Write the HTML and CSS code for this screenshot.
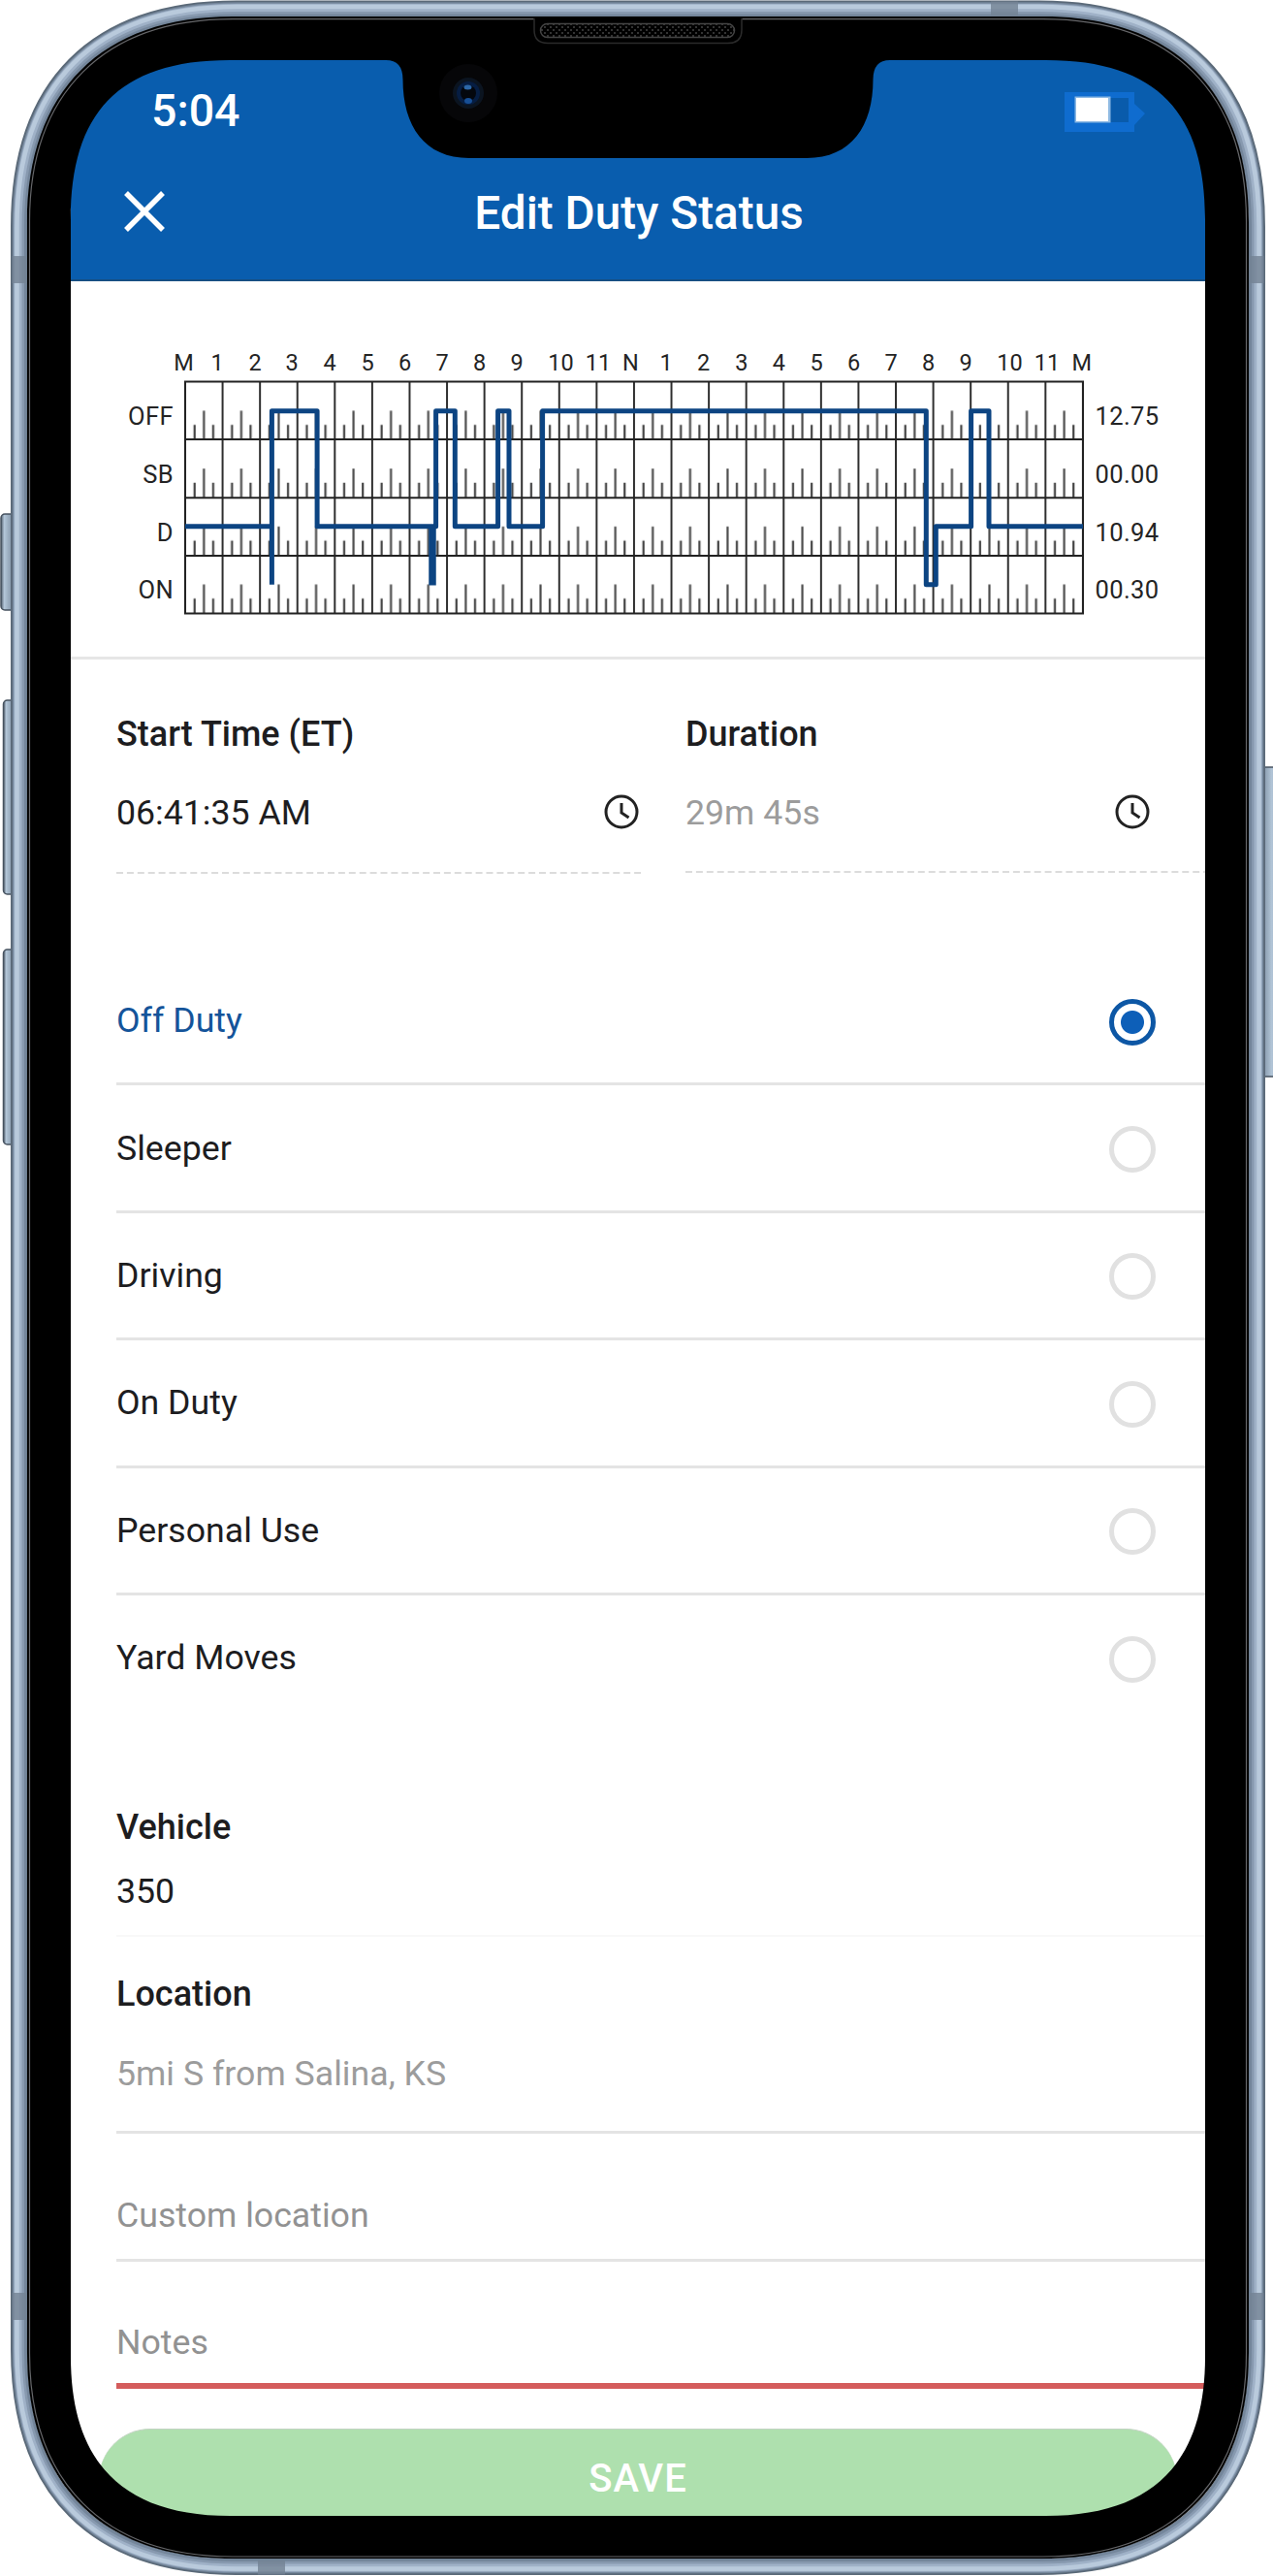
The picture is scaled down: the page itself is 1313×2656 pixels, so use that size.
FILE: index.html
```html
<!DOCTYPE html>
<html lang="en">
<head>
<meta charset="utf-8">
<title>Edit Duty Status</title>
<link rel="stylesheet" href="styles.css">
</head>
<body>
<div class="phone">
  <main class="screen">
    <header class="header">
      <div class="status-bar">
        <span class="time">5:04</span>
        <svg class="battery" width="84" height="44" viewBox="0 0 84 44"><path d="M0 1h72v12l11 10-11 12v7H0z" fill="#0f6ccf"/><rect x="46" y="7" width="20" height="25" fill="#095bab"/><rect x="10.500" y="5.500" width="37" height="27" fill="#8eb9e3"/><rect x="12" y="7" width="33" height="24" fill="#fff"/></svg>
      </div>
      <div class="title-bar">
        <svg class="close" width="42" height="42" viewBox="0 0 42 42"><path d="M2 2L40 40M40 2L2 40" stroke="#fff" stroke-width="5.500" fill="none"/></svg>
        <h1>Edit Duty Status</h1>
      </div>
    </header>

    <section class="log">
      <svg width="1170" height="389" viewBox="73 290 1170 389">
        <defs>
          <pattern id="cell" x="191" y="393.500" width="38.580" height="59.700" patternUnits="userSpaceOnUse">
            <path d="M9.700 44.500V59.700M28.900 44.500V59.700" stroke="#444" stroke-width="2.200"/>
            <path d="M19.300 30V59.700" stroke="#4a4a4a" stroke-width="2.200"/>
          </pattern>
          <pattern id="hours" x="190" y="393" width="38.580" height="300" patternUnits="userSpaceOnUse">
            <path d="M1 0V300" stroke="#2e2e2e" stroke-width="2"/>
          </pattern>
        </defs>
        <rect x="191" y="393.500" width="925.800" height="238.800" fill="url(#cell)"/>
        <rect x="190" y="393.500" width="926.800" height="238.800" fill="url(#hours)"/>
        <path d="M191 393.500H1117V632.500H191zM191 453H1117M191 513.300H1117M191 573H1117" stroke="#222" stroke-width="2" fill="none"/>
        <g stroke="#0c4482" stroke-width="5" fill="none" stroke-linejoin="round">
          <path d="M191 542.700H280.400M280.400 602.700V423.700H327.100V542.700H447.500V542.700H449.600V423.700H469.300V542.700H513.600V423.700H525V542.700H559.600V423.700H955.300V602.700H965.300V542.700H1001.600V423.700H1020V542.700H1117"/>
          <path d="M446 542V603.500" stroke-width="7.500"/>
        </g>
        <g class="hour-labels">
          <text x="189.500" y="382">M</text><text x="224" y="382">1</text><text x="263" y="382">2</text><text x="301" y="382">3</text><text x="340" y="382">4</text><text x="379" y="382">5</text><text x="417.500" y="382">6</text><text x="456" y="382">7</text><text x="494.500" y="382">8</text><text x="533" y="382">9</text><text x="578.500" y="382">10</text><text x="617" y="382">11</text><text x="650.500" y="382">N</text><text x="687" y="382">1</text><text x="725.700" y="382">2</text><text x="764.800" y="382">3</text><text x="803.400" y="382">4</text><text x="842" y="382">5</text><text x="880.500" y="382">6</text><text x="919" y="382">7</text><text x="957.600" y="382">8</text><text x="996" y="382">9</text><text x="1041.500" y="382">10</text><text x="1080" y="382">11</text><text x="1115.700" y="382">M</text>
        </g>
        <g class="row-labels"><text x="179" y="438">OFF</text><text x="179" y="498">SB</text><text x="179" y="558">D</text><text x="179" y="617">ON</text></g>
        <g class="totals"><text x="1129.500" y="438">12.75</text><text x="1129.500" y="498">00.00</text><text x="1129.500" y="558">10.94</text><text x="1129.500" y="617">00.30</text></g>
      </svg>
    </section>

    <section class="times">
      <div class="field start">
        <label>Start Time (ET)</label>
        <div class="value"><span>06:41:35 AM</span><svg class="clock" width="38" height="38" viewBox="0 0 38 38"><circle cx="19" cy="19" r="16" /><path d="M19 10V20L26.500 25"/></svg></div>
        <svg class="dashes" width="541" height="2"><path d="M0 1H541"/></svg>
      </div>
      <div class="field duration">
        <label>Duration</label>
        <div class="value muted"><span>29m 45s</span><svg class="clock" width="38" height="38" viewBox="0 0 38 38"><circle cx="19" cy="19" r="16" /><path d="M19 10V20L26.500 25"/></svg></div>
        <svg class="dashes" width="536" height="2"><path d="M0 1H536"/></svg>
      </div>
    </section>

    <ul class="options">
      <li class="selected"><span>Off Duty</span><i class="radio"></i></li>
      <li><span>Sleeper</span><i class="radio"></i></li>
      <li><span>Driving</span><i class="radio"></i></li>
      <li><span>On Duty</span><i class="radio"></i></li>
      <li><span>Personal Use</span><i class="radio"></i></li>
      <li><span>Yard Moves</span><i class="radio"></i></li>
    </ul>

    <section class="details">
      <div class="vehicle"><label>Vehicle</label><span>350</span></div>
      <div class="location"><label>Location</label><span>5mi S from Salina, KS</span></div>
      <div class="input custom">Custom location</div>
      <div class="input notes">Notes</div>
    </section>
    <button class="save">SAVE</button>
  </main>

  <svg class="frame" width="1313" height="2656" viewBox="0 0 1313 2656">
    <defs>
      <linearGradient id="btnL"><stop offset="0" stop-color="#53606e"/><stop offset=".25" stop-color="#b3c6d8"/><stop offset="1" stop-color="#75879a"/></linearGradient>
      <linearGradient id="btnR"><stop offset="0" stop-color="#75879a"/><stop offset=".7" stop-color="#b3c6d8"/><stop offset="1" stop-color="#93a7ba"/></linearGradient>
      <pattern id="mesh" width="6" height="6" patternUnits="userSpaceOnUse"><path d="M0 0h2v2h-2zM3 3h2v2h-2z" fill="#333"/></pattern>
      <clipPath id="bands"><path d="M0 264h40v28H0zM1280 264h33v28h-33zM0 2364h40v28H0zM1280 2364h33v28h-33zM1022 0h28v40h-28zM266 2620h28v36h-28z"/></clipPath>
    </defs>
    <g stroke="#46525f" stroke-width="1.500">
      <rect x="1" y="530" width="14" height="99" rx="4" fill="url(#btnL)"/>
      <rect x="3.500" y="722" width="12" height="200" rx="4" fill="url(#btnL)"/>
      <rect x="3.500" y="979" width="12" height="201" rx="4" fill="url(#btnL)"/>
      <rect x="1300" y="791" width="17" height="319" rx="4" fill="url(#btnR)"/>
    </g>
    <g fill="none">
      <path stroke="#5a6978" stroke-width="17" d="M19.500 234C19.500 88 98.500 9 244 9H1072C1217.500 9 1296.500 88 1296.500 234V2422C1296.500 2567.500 1217.500 2646.500 1072 2646.500H244C98.500 2646.500 19.500 2567.500 19.500 2422Z"/>
      <path stroke="#74869b" stroke-width="15" d="M20.300 234C20.300 89 99 9.800 244 9.800H1072C1217 9.800 1295.700 89 1295.700 234V2422C1295.700 2567 1217 2645.700 1072 2645.700H244C99 2645.700 20.300 2567 20.300 2422Z"/>
      <path stroke="#8799af" stroke-width="11" d="M19.500 234C19.500 88 98.500 9 244 9H1072C1217.500 9 1296.500 88 1296.500 234V2422C1296.500 2567.500 1217.500 2646.500 1072 2646.500H244C98.500 2646.500 19.500 2567.500 19.500 2422Z"/>
      <path stroke="#9fb1c7" stroke-width="8" d="M18.500 234C18.500 87.500 98 8 244 8H1072C1218 8 1297.500 87.500 1297.500 234V2422C1297.500 2568 1218 2647.500 1072 2647.500H244C98 2647.500 18.500 2568 18.500 2422Z"/>
      <path stroke="#b9cadc" stroke-width="4.500" d="M17.500 234C17.500 87 97.500 7 244 7H1072C1218.500 7 1298.500 87 1298.500 234V2422C1298.500 2568.500 1218.500 2648.500 1072 2648.500H244C97.500 2648.500 17.500 2568.500 17.500 2422Z"/>
    </g>
    <g clip-path="url(#bands)"><path fill="none" stroke="#738294" stroke-opacity=".8" stroke-width="15" d="M20 234C20 88 98 9 244 9H1072C1218 9 1296 88 1296 234V2422C1296 2568 1218 2647 1072 2647H244C98 2647 20 2568 20 2422Z"/></g>
    <path fill="#000" fill-rule="evenodd" d="M28 229C28 94 105 17 240 17H1076C1211 17 1288 94 1288 229V2426C1288 2561 1211 2638 1076 2638H240C105 2638 28 2561 28 2426ZM73 226C73 118 121 62 237 62H398Q415.500 62 415.500 82C415.500 130 438 163 484 163H832C878 163 900.500 130 900.500 82Q900.500 62 918 62H1079C1195 62 1243 118 1243 226V2430C1243 2538 1190 2594 1079 2594H237C126 2594 73 2538 73 2430Z"/>
    <path fill="none" stroke="#66676a" stroke-width="1.200" d="M30.500 228C30.500 96 107 19.700 240 19.700H1076C1209 19.700 1285.500 96 1285.500 228V2426C1285.500 2559 1209 2636 1076 2636H240C107 2636 30.500 2559 30.500 2426Z"/>
    <path d="M551 19v12q0 13.500 14 13.500h186q14 0 14-13.500v-12" fill="#000" stroke="#2b2b2b" stroke-width="1.500"/>
    <rect x="557.500" y="24.500" width="200" height="14" rx="7" fill="url(#mesh)" stroke="#444" stroke-width="1.500"/>
    <circle cx="483" cy="96" r="30" fill="#060608"/><circle cx="483" cy="96" r="16" fill="#0b1420"/><circle cx="483" cy="96" r="12" fill="#061d42"/><circle cx="483" cy="96" r="8" fill="#04070d"/>
    <ellipse cx="482.500" cy="90" rx="4" ry="2.500" fill="#2c67a8"/><ellipse cx="483" cy="104" rx="4" ry="3" fill="#174f96"/>
  </svg>
</div>
</body>
</html>
```

FILE: styles.css
```css
* { box-sizing: border-box; }
body { margin: 0; background: #fff; font-family: Roboto, "Liberation Sans", sans-serif; color: #1d1d1f; }
.phone { position: relative; width: 1313px; height: 2656px; padding: 62px 70px 62px 73px; overflow: hidden; }
.screen { display: flex; flex-direction: column; width: 1170px; height: 2532px; background: #fff; border-radius: 110px; overflow: hidden; }
.frame { position: absolute; left: 0; top: 0; pointer-events: none; }

.header { flex: none; height: 228px; background: #095dae; border-bottom: 2px solid #174f83; color: #fff; }
.status-bar { display: flex; justify-content: space-between; align-items: flex-start; height: 118px; padding: 24px 61px 0 83px; }
.time { font-size: 46.5px; font-weight: 500; line-height: 56px; }
.battery { margin-top: 8px; }
.title-bar { display: grid; grid-template-columns: 42px 1fr 42px; align-items: center; height: 76px; padding: 0 55px; }
.title-bar h1 { margin: 3px 0 0 2px; font-size: 47.7px; font-weight: 500; line-height: 56px; text-align: center; }

.log { flex: none; height: 390px; border-bottom: 3px solid #e6e6e6; }
.log svg { display: block; }
.log text { fill: #242424; font-size: 25.5px; letter-spacing: .4px; }
.log .hour-labels text { font-size: 23.5px; letter-spacing: 0; text-anchor: middle; }
.row-labels { text-anchor: end; }

.times { flex: none; display: flex; justify-content: space-between; height: 308px; padding: 55px 0 0 47px; }
.field { display: flex; flex-direction: column; width: 543px; }
.duration { width: 536px; }
.field label, .details label { font-size: 36px; font-weight: 500; line-height: 44px; }
.value { display: flex; justify-content: space-between; align-items: center; height: 44px; margin-top: 37px; padding-right: 3px; font-size: 35.7px; }
.duration .value { padding-right: 56px; }
.value span { line-height: 44px; }
.muted { color: #9c9c9c; }
.clock { margin-bottom: 3px; fill: none; stroke: #222; stroke-width: 3; }
.dashes { margin-top: 39px; stroke: #dcdcdc; stroke-width: 2; stroke-dasharray: 7 3.900; }
.duration .dashes { margin-top: 38px; }

.options { flex: none; margin: 0; padding: 0 0 0 47px; list-style: none; font-size: 35.7px; }
.options li { display: flex; justify-content: space-between; align-items: center; height: 131.4px; padding-right: 51px; border-bottom: 3px solid #e4e4e4; }
.options li:last-child { border-bottom-color: transparent; }
.selected span { color: #14549a; }
.radio { width: 48px; height: 48px; margin-top: 3px; border: 5px solid #e1e1e1; border-radius: 50%; }
.selected .radio { border-color: #0d57a5; background: radial-gradient(circle, #0d5fb8 11.500px, transparent 12.500px); }

.details { flex: none; padding-left: 47px; font-size: 35.7px; line-height: 44px; }
.vehicle, .location { display: flex; flex-direction: column; }
.vehicle { height: 221px; padding-top: 86px; gap: 22px; border-bottom: 2px solid #f8f8f8; }
.location { height: 203px; padding-top: 37px; gap: 38px; border-bottom: 3px solid #e4e4e4; color: #9c9c9c; }
.location label { color: #1d1d1f; }
.input { display: flex; align-items: flex-end; height: 132px; padding-bottom: 23px; border-bottom: 3px solid #e4e4e4; color: #929292; }
.notes { height: 131px; padding-bottom: 20px; border-bottom: 6px solid #d45c5c; }
.save { flex: none; align-self: center; width: 1112px; height: 106px; margin-top: 41px; padding: 0 0 4px; border: 0; border-top: 1px solid #c4d3c4; border-radius: 53px; background: #aee0ae; color: #fff; font: 500 40px/50px Roboto, "Liberation Sans", sans-serif; letter-spacing: 1px; }
```
